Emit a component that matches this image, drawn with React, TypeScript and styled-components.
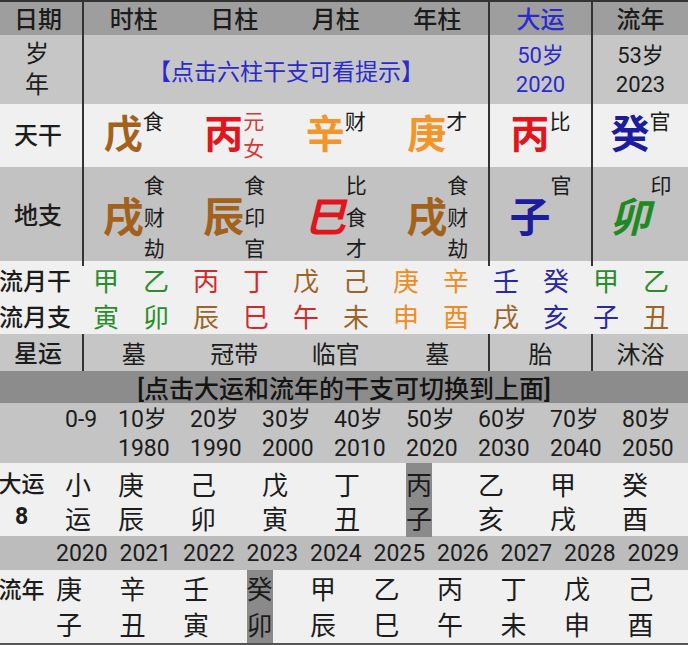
import React from 'react';
import styled, { createGlobalStyle } from 'styled-components';

const FONT = `Roboto, "Noto Sans CJK SC", sans-serif`;
const INK = '#1c1c1c';
const BROWN = '#a2621c';
const RED = '#e0161c';
const ORANGE = '#f2952a';
const NAVY = '#1c1c9c';
const GREEN = '#1f8a22';
const BLUE = '#2a2ad0';

const M_GREEN = '#2a8c2a';
const M_RED = '#d22a2a';
const M_BROWN = '#9c6426';
const M_ORANGE = '#ee8c22';
const M_BLUE = '#2a2a9e';

const GlobalStyle = createGlobalStyle`
  html, body { margin: 0; padding: 0; background: #f0f0f0; }
  body { font-family: ${FONT}; color: ${INK}; }
`;

const Page = styled.div`
  width: 688px;
  height: 645px;
  box-sizing: border-box;
  overflow: hidden;
  background: #f0f0f0;
  border-top: 2px solid #333;
  border-bottom: 2px solid #555;
`;

const COLS = '82px repeat(4, 101.5px) 103px 97px';

const PillarRow = styled.div<{ $bg: string; $h: number }>`
  display: grid;
  grid-template-columns: ${COLS};
  height: ${p => p.$h}px;
  background: ${p => p.$bg};
`;

const Cell = styled.div<{ $divider?: boolean; $span?: number; $pt?: number; $pr?: number }>`
  display: flex;
  align-items: center;
  justify-content: center;
  min-width: 0;
  grid-column: span ${p => p.$span ?? 1};
  border-left: ${p => (p.$divider ? '2px solid #333' : '0')};
  padding-top: ${p => p.$pt ?? 0}px;
  padding-right: ${p => p.$pr ?? 0}px;
  box-sizing: border-box;
`;

const HeadText = styled.span<{ $color?: string }>`
  font-size: 24px;
  line-height: 30px;
  font-weight: 500;
  color: ${p => p.$color ?? INK};
`;

const Stack = styled.div<{ $lh: number; $size: number; $color?: string }>`
  display: flex;
  flex-direction: column;
  align-items: center;
  font-size: ${p => p.$size}px;
  line-height: ${p => p.$lh}px;
  color: ${p => p.$color ?? INK};
`;

const Hint = styled.span`
  font-size: 23px;
  line-height: 30px;
  color: ${BLUE};
  white-space: nowrap;
`;

const Group = styled.div<{ $align: 'start' | 'center' }>`
  display: flex;
  align-items: ${p => (p.$align === 'start' ? 'flex-start' : 'center')};
`;

const Big = styled.span<{ $color: string; $size: number; $italic?: boolean }>`
  font-size: ${p => p.$size}px;
  line-height: ${p => p.$size}px;
  height: ${p => p.$size}px;
  font-weight: 700;
  color: ${p => p.$color};
  font-style: ${p => (p.$italic ? 'italic' : 'normal')};
`;

const SupCol = styled.div<{ $lh: number; $top?: number; $h?: number; $color?: string }>`
  display: flex;
  flex-direction: column;
  font-size: 21px;
  line-height: ${p => p.$lh}px;
  color: ${p => p.$color ?? INK};
  margin-top: ${p => p.$top ?? 0}px;
  height: ${p => (p.$h ? `${p.$h}px` : 'auto')};
  white-space: pre;
`;

const MonthBlock = styled.div`
  display: grid;
  grid-template-columns: 81px repeat(12, 50px);
  grid-auto-rows: 36.5px;
  height: 73px;
  background: #f0f0f0;
`;

const MonthLabel = styled.div`
  display: flex;
  align-items: center;
  margin-left: -1px;
  font-size: 24px;
  font-weight: 500;
  white-space: nowrap;
  color: ${INK};
`;

const MonthChar = styled.div<{ $color: string }>`
  display: flex;
  align-items: center;
  justify-content: center;
  font-size: 26px;
  color: ${p => p.$color};
`;

const StarText = styled.span`
  font-size: 24px;
  line-height: 30px;
  color: ${INK};
`;

const Banner = styled.div`
  height: 32px;
  background: #8c8c8c;
  display: flex;
  align-items: center;
  justify-content: center;
  font-size: 25px;
  font-weight: 500;
  color: #141414;
  white-space: nowrap;
`;

const DayunGrid = styled.div<{ $bg: string; $h: number }>`
  display: grid;
  grid-template-columns: 65px 53px repeat(8, 72px);
  height: ${p => p.$h}px;
  background: ${p => p.$bg};
`;

const YearGrid = styled.div<{ $bg: string; $h: number }>`
  display: grid;
  grid-template-columns: 56px repeat(10, 63.5px);
  height: ${p => p.$h}px;
  background: ${p => p.$bg};
`;

const TwoLine = styled.div<{ $lh: number; $size: number; $pt?: number }>`
  display: flex;
  flex-direction: column;
  justify-content: center;
  align-items: flex-start;
  font-size: ${p => p.$size}px;
  line-height: ${p => p.$lh}px;
  padding-top: ${p => p.$pt ?? 0}px;
  white-space: nowrap;
  color: ${INK};
`;

const YearCell = styled.div`
  display: flex;
  align-items: center;
  font-size: 23px;
  color: ${INK};
  white-space: nowrap;
`;

const GzCell = styled.div<{ $lh: number; $pt: number; $active?: boolean }>`
  justify-self: start;
  display: flex;
  flex-direction: column;
  align-items: center;
  width: 26px;
  font-size: 26px;
  line-height: ${p => p.$lh}px;
  padding-top: ${p => p.$pt}px;
  box-sizing: border-box;
  color: ${INK};
  background: ${p => (p.$active ? '#8a8a8a' : 'transparent')};
`;

const SideLabel = styled.div<{ $pt: number; $lh: number }>`
  justify-self: start;
  width: 43px;
  display: flex;
  flex-direction: column;
  align-items: center;
  padding-top: ${p => p.$pt}px;
  font-size: 23px;
  line-height: ${p => p.$lh}px;
  font-weight: 500;
  white-space: nowrap;
  color: ${INK};
`;

const Num = styled.span`
  font-weight: 700;
  font-size: 23px;
`;

type Pillar = {
  title: string;
  titleColor?: string;
  stem: string;
  stemColor: string;
  stemSup: string[];
  stemSupColor?: string;
  branch: string;
  branchColor: string;
  branchItalic?: boolean;
  branchSup: string[];
  star: string;
};

const pillars: Pillar[] = [
  { title: '时柱', stem: '戊', stemColor: BROWN, stemSup: ['食'], branch: '戌', branchColor: BROWN, branchSup: ['食', '财', '劫'], star: '墓' },
  { title: '日柱', stem: '丙', stemColor: RED, stemSup: ['元', '女'], stemSupColor: '#d43a3a', branch: '辰', branchColor: BROWN, branchSup: ['食', '印', '官'], star: '冠带' },
  { title: '月柱', stem: '辛', stemColor: ORANGE, stemSup: ['财'], branch: '巳', branchColor: RED, branchItalic: true, branchSup: ['比', '食', '才'], star: '临官' },
  { title: '年柱', stem: '庚', stemColor: ORANGE, stemSup: ['才'], branch: '戌', branchColor: BROWN, branchSup: ['食', '财', '劫'], star: '墓' },
  { title: '大运', titleColor: BLUE, stem: '丙', stemColor: RED, stemSup: ['比'], branch: '子', branchColor: NAVY, branchSup: ['官', ' ', ' '], star: '胎' },
  { title: '流年', stem: '癸', stemColor: NAVY, stemSup: ['官'], branch: '卯', branchColor: GREEN, branchItalic: true, branchSup: ['印', ' ', ' '], star: '沐浴' },
];

const divAt = (i: number) => i === 0 || i === 4 || i === 5;

const monthStems: [string, string][] = [
  ['甲', M_GREEN], ['乙', M_GREEN], ['丙', M_RED], ['丁', M_RED], ['戊', M_BROWN], ['己', M_BROWN],
  ['庚', M_ORANGE], ['辛', M_ORANGE], ['壬', M_BLUE], ['癸', M_BLUE], ['甲', M_GREEN], ['乙', M_GREEN],
];
const monthBranches: [string, string][] = [
  ['寅', M_GREEN], ['卯', M_GREEN], ['辰', M_BROWN], ['巳', M_RED], ['午', M_RED], ['未', M_BROWN],
  ['申', M_ORANGE], ['酉', M_ORANGE], ['戌', M_BROWN], ['亥', M_BLUE], ['子', M_BLUE], ['丑', M_BROWN],
];

const dayun = [
  { age: '0-9', year: '', gz: '小运' },
  { age: '10岁', year: '1980', gz: '庚辰' },
  { age: '20岁', year: '1990', gz: '己卯' },
  { age: '30岁', year: '2000', gz: '戊寅' },
  { age: '40岁', year: '2010', gz: '丁丑' },
  { age: '50岁', year: '2020', gz: '丙子' },
  { age: '60岁', year: '2030', gz: '乙亥' },
  { age: '70岁', year: '2040', gz: '甲戌' },
  { age: '80岁', year: '2050', gz: '癸酉' },
];
const DAYUN_ACTIVE = 5;

const liunian = [
  ['2020', '庚子'], ['2021', '辛丑'], ['2022', '壬寅'], ['2023', '癸卯'], ['2024', '甲辰'],
  ['2025', '乙巳'], ['2026', '丙午'], ['2027', '丁未'], ['2028', '戊申'], ['2029', '己酉'],
];
const LIUNIAN_ACTIVE = 3;

export default function App() {
  return (
    <Page>
      <GlobalStyle />
      <PillarRow $bg="#9e9e9e" $h={33}>
        <Cell $pr={6} $pt={2}><HeadText>日期</HeadText></Cell>
        {pillars.map((p, i) => (
          <Cell key={i} $divider={divAt(i)} $pt={2}>
            <HeadText $color={p.titleColor}>{p.title}</HeadText>
          </Cell>
        ))}
      </PillarRow>

      <PillarRow $bg="#c6c6c6" $h={69}>
        <Cell $pr={8}>
          <Stack $lh={31} $size={24}><span>岁</span><span>年</span></Stack>
        </Cell>
        <Cell $divider $span={4} $pt={6}>
          <Hint>【点击六柱干支可看提示】</Hint>
        </Cell>
        <Cell $divider>
          <Stack $lh={29} $size={22} $color={BLUE}><span>50岁</span><span>2020</span></Stack>
        </Cell>
        <Cell $divider>
          <Stack $lh={29} $size={22}><span>53岁</span><span>2023</span></Stack>
        </Cell>
      </PillarRow>

      <PillarRow $bg="#f0f0f0" $h={63}>
        <Cell $pr={6}><HeadText>天干</HeadText></Cell>
        {pillars.map((p, i) => (
          <Cell key={i} $divider={divAt(i)}>
            <Group $align="start">
              <Big $color={p.stemColor} $size={39}>{p.stem}</Big>
              <SupCol $lh={27} $top={-7} $h={39} $color={p.stemSupColor}>
                {p.stemSup.map((s, k) => <span key={k}>{s}</span>)}
              </SupCol>
            </Group>
          </Cell>
        ))}
      </PillarRow>

      <PillarRow $bg="#c2c2c2" $h={94}>
        <Cell $pr={6}><HeadText>地支</HeadText></Cell>
        {pillars.map((p, i) => (
          <Cell key={i} $divider={divAt(i)} $pt={4}>
            <Group $align="center">
              <Big $color={p.branchColor} $size={41} $italic={p.branchItalic}>{p.branch}</Big>
              <SupCol $lh={31.5}>
                {p.branchSup.map((s, k) => <span key={k}>{s}</span>)}
              </SupCol>
            </Group>
          </Cell>
        ))}
      </PillarRow>

      <MonthBlock>
        <MonthLabel>流月干</MonthLabel>
        {monthStems.map(([c, col], i) => <MonthChar key={i} $color={col}>{c}</MonthChar>)}
        <MonthLabel>流月支</MonthLabel>
        {monthBranches.map(([c, col], i) => <MonthChar key={i} $color={col}>{c}</MonthChar>)}
      </MonthBlock>

      <PillarRow $bg="#c6c6c6" $h={37}>
        <Cell $pr={6} $pt={3}><HeadText>星运</HeadText></Cell>
        {pillars.map((p, i) => (
          <Cell key={i} $divider={divAt(i)} $pt={5}>
            <StarText>{p.star}</StarText>
          </Cell>
        ))}
      </PillarRow>

      <Banner>[点击大运和流年的干支可切换到上面]</Banner>

      <DayunGrid $bg="#c4c4c4" $h={60}>
        <div />
        {dayun.map((d, i) => (
          <TwoLine key={i} $lh={29} $size={23} $pt={2}>
            <span>{d.age}</span>
            <span>{d.year || '\u00a0'}</span>
          </TwoLine>
        ))}
      </DayunGrid>

      <DayunGrid $bg="#f0f0f0" $h={73}>
        <SideLabel $pt={6} $lh={32}>
          <span>大运</span>
          <Num>8</Num>
        </SideLabel>
        {dayun.map((d, i) => (
          <GzCell key={i} $lh={34} $pt={6} $active={i === DAYUN_ACTIVE}>
            <span>{d.gz[0]}</span>
            <span>{d.gz[1]}</span>
          </GzCell>
        ))}
      </DayunGrid>

      <YearGrid $bg="#bcbcbc" $h={34}>
        <div />
        {liunian.map(([y], i) => <YearCell key={i}>{y}</YearCell>)}
      </YearGrid>

      <YearGrid $bg="#f0f0f0" $h={71}>
        <SideLabel $pt={3} $lh={36}><span>流年</span></SideLabel>
        {liunian.map(([, gz], i) => (
          <GzCell key={i} $lh={36} $pt={2} $active={i === LIUNIAN_ACTIVE}>
            <span>{gz[0]}</span>
            <span>{gz[1]}</span>
          </GzCell>
        ))}
      </YearGrid>
    </Page>
  );
}
